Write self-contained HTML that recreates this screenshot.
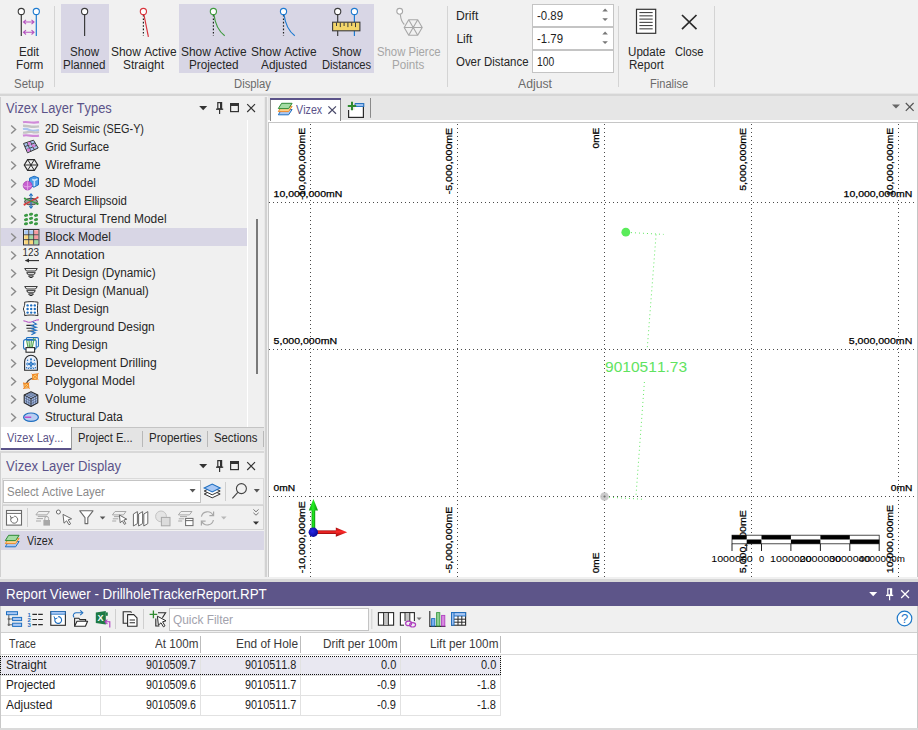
<!DOCTYPE html>
<html>
<head>
<meta charset="utf-8">
<title>Vizex</title>
<style>
*{box-sizing:border-box;margin:0;padding:0}
html,body{width:918px;height:730px;overflow:hidden;background:#f0f0f0}
body{font-family:"Liberation Sans",sans-serif;font-size:12px;color:#1e1e1e;position:relative;font-kerning:none}
.abs{position:absolute}
.t{position:absolute;white-space:nowrap;transform-origin:0 50%;display:block}
svg{position:absolute;overflow:visible}
</style>
</head>
<body>
<!-- ribbon -->
<div id="ribbon">
<div class="abs" style="left:0px;top:0px;width:918px;height:94px;background:#f1f1f1;"></div>
<div class="abs" style="left:0px;top:93px;width:918px;height:1px;background:#e6e6e6;"></div>
<div class="abs" style="left:0px;top:94px;width:918px;height:2px;background:#d6d6d6;"></div>
<div class="abs" style="left:61px;top:4px;width:48px;height:69px;background:#d8d6e5;"></div>
<div class="abs" style="left:179px;top:4px;width:195px;height:69px;background:#d8d6e5;"></div>
<div class="abs" style="left:54px;top:6px;width:1px;height:81px;background:#d4d4d4;"></div>
<div class="abs" style="left:447px;top:6px;width:1px;height:81px;background:#d4d4d4;"></div>
<div class="abs" style="left:618px;top:6px;width:1px;height:81px;background:#d4d4d4;"></div>
<div class="abs" style="left:714px;top:6px;width:1px;height:81px;background:#d4d4d4;"></div>
<span class="t" style="left:19.30px;top:45.34px;font-size:12px;line-height:14px;color:#262626;transform:scaleX(0.9672);">Edit</span>
<span class="t" style="left:15.60px;top:58.34px;font-size:12px;line-height:14px;color:#262626;transform:scaleX(0.9787);">Form</span>
<span class="t" style="left:70.10px;top:45.34px;font-size:12px;line-height:14px;color:#262626;transform:scaleX(0.9661);">Show</span>
<span class="t" style="left:63.35px;top:58.34px;font-size:12px;line-height:14px;color:#262626;transform:scaleX(0.9650);">Planned</span>
<span class="t" style="left:111.20px;top:45.34px;font-size:12px;line-height:14px;color:#262626;transform:scaleX(0.9944);">Show Active</span>
<span class="t" style="left:123.20px;top:58.34px;font-size:12px;line-height:14px;color:#262626;transform:scaleX(0.9914);">Straight</span>
<span class="t" style="left:181.20px;top:45.34px;font-size:12px;line-height:14px;color:#262626;transform:scaleX(0.9944);">Show Active</span>
<span class="t" style="left:188.95px;top:58.34px;font-size:12px;line-height:14px;color:#262626;transform:scaleX(0.9764);">Projected</span>
<span class="t" style="left:251.00px;top:45.34px;font-size:12px;line-height:14px;color:#262626;transform:scaleX(0.9944);">Show Active</span>
<span class="t" style="left:260.50px;top:58.34px;font-size:12px;line-height:14px;color:#262626;transform:scaleX(0.9850);">Adjusted</span>
<span class="t" style="left:331.80px;top:45.34px;font-size:12px;line-height:14px;color:#262626;transform:scaleX(0.9661);">Show</span>
<span class="t" style="left:321.70px;top:58.34px;font-size:12px;line-height:14px;color:#262626;transform:scaleX(0.9338);">Distances</span>
<span class="t" style="left:376.70px;top:45.34px;font-size:12px;line-height:14px;color:#a6a6a6;transform:scaleX(0.9441);">Show Pierce</span>
<span class="t" style="left:392.35px;top:58.34px;font-size:12px;line-height:14px;color:#a6a6a6;transform:scaleX(0.9684);">Points</span>
<span class="t" style="left:627.60px;top:45.34px;font-size:12px;line-height:14px;color:#262626;transform:scaleX(0.9665);">Update</span>
<span class="t" style="left:628.90px;top:58.34px;font-size:12px;line-height:14px;color:#262626;transform:scaleX(0.9662);">Report</span>
<span class="t" style="left:674.60px;top:45.34px;font-size:12px;line-height:14px;color:#262626;transform:scaleX(0.9257);">Close</span>
<span class="t" style="left:14.00px;top:77.04px;font-size:12px;line-height:14px;color:#6b6b6b;transform:scaleX(0.9566);">Setup</span>
<span class="t" style="left:233.50px;top:77.04px;font-size:12px;line-height:14px;color:#6b6b6b;transform:scaleX(0.9404);">Display</span>
<span class="t" style="left:518.40px;top:77.04px;font-size:12px;line-height:14px;color:#6b6b6b;transform:scaleX(1.0194);">Adjust</span>
<span class="t" style="left:649.90px;top:77.04px;font-size:12px;line-height:14px;color:#6b6b6b;transform:scaleX(0.9238);">Finalise</span>
<span class="t" style="left:456.40px;top:9.34px;font-size:12px;line-height:14px;color:#262626;transform:scaleX(1.0138);">Drift</span>
<span class="t" style="left:456.40px;top:32.44px;font-size:12px;line-height:14px;color:#262626;">Lift</span>
<span class="t" style="left:456.40px;top:55.44px;font-size:12px;line-height:14px;color:#262626;transform:scaleX(0.9536);">Over Distance</span>
<div class="abs" style="left:532px;top:4px;width:82px;height:23px;background:#fff;border:1px solid #c4c4c4;"></div>
<span class="t" style="left:536.60px;top:9.34px;font-size:12px;line-height:14px;color:#1e1e1e;transform:scaleX(0.9506);">-0.89</span>
<div class="abs" style="left:532px;top:27px;width:82px;height:23px;background:#fff;border:1px solid #c4c4c4;"></div>
<span class="t" style="left:536.60px;top:32.34px;font-size:12px;line-height:14px;color:#1e1e1e;transform:scaleX(0.9506);">-1.79</span>
<div class="abs" style="left:532px;top:50px;width:82px;height:23px;background:#fff;border:1px solid #c4c4c4;"></div>
<span class="t" style="left:536.60px;top:55.34px;font-size:12px;line-height:14px;color:#1e1e1e;transform:scaleX(0.8590);">100</span>
<svg style="left:0px;top:0px" width="918" height="94" viewBox="0 0 918 94"><path d="M602.3 11.5l2.8-2.9 2.8 2.9z" fill="#777"/><path d="M602.3 18.2l2.8 2.9 2.8-2.9z" fill="#777"/><path d="M602.3 34.5l2.8-2.9 2.8 2.9z" fill="#777"/><path d="M602.3 41.2l2.8 2.9 2.8-2.9z" fill="#777"/></svg>
<svg style="left:0px;top:0px" width="918" height="94" viewBox="0 0 918 94"><line x1="21.3" y1="15" x2="21.3" y2="36" stroke="#3c3c3c" stroke-width="1.2"/><circle cx="21.3" cy="11.5" r="3.1" fill="#fff" stroke="#3c3c3c" stroke-width="1.1"/><line x1="36.3" y1="15" x2="36.3" y2="36" stroke="#1e7bd0" stroke-width="1.2"/><circle cx="36.3" cy="11.5" r="3.1" fill="#fff" stroke="#1e7bd0" stroke-width="1.1"/><g stroke="#b553c0" stroke-width="1.1" fill="none"><path d="M23.5 22h10.5M26 19.8l-2.5 2.2 2.5 2.2M31.5 19.8l2.5 2.2-2.5 2.2"/><path d="M23.5 32.3h10.5M26 30.1l-2.5 2.2 2.5 2.2M31.5 30.1l2.5 2.2-2.5 2.2"/></g><line x1="84.6" y1="15" x2="84.6" y2="36" stroke="#3c3c3c" stroke-width="1.2"/><circle cx="84.6" cy="11.5" r="3.1" fill="#fff" stroke="#3c3c3c" stroke-width="1.1"/><line x1="143.4" y1="15" x2="143.4" y2="36" stroke="#222" stroke-width="1.2" stroke-dasharray="1.6 1.8"/><line x1="143.9" y1="14.5" x2="148.4" y2="36.8" stroke="#d8343c" stroke-width="1.2"/><circle cx="143.4" cy="11.5" r="3.1" fill="#fff" stroke="#d8343c" stroke-width="1.1"/><line x1="213.4" y1="15" x2="213.4" y2="36" stroke="#222" stroke-width="1.2" stroke-dasharray="1.6 1.8"/><path d="M213.9 14.5c1.2 9 5 17 10.8 21.2" fill="none" stroke="#3f9a3f" stroke-width="1.2"/><circle cx="213.4" cy="11.5" r="3.1" fill="#fff" stroke="#3f9a3f" stroke-width="1.1"/><line x1="283.5" y1="15" x2="283.5" y2="36" stroke="#222" stroke-width="1.2" stroke-dasharray="1.6 1.8"/><path d="M284 14.5c1.2 9 5 17 10.8 21.2" fill="none" stroke="#1e7bd0" stroke-width="1.2"/><circle cx="283.5" cy="11.5" r="3.1" fill="#fff" stroke="#1e7bd0" stroke-width="1.1"/><line x1="337.7" y1="15" x2="337.7" y2="36" stroke="#3c3c3c" stroke-width="1.2"/><circle cx="337.7" cy="11.5" r="3.1" fill="#fff" stroke="#3c3c3c" stroke-width="1.1"/><line x1="354.4" y1="15" x2="354.4" y2="36" stroke="#1e7bd0" stroke-width="1.2"/><circle cx="354.4" cy="11.5" r="3.1" fill="#fff" stroke="#1e7bd0" stroke-width="1.1"/><rect x="332.6" y="22.2" width="27.3" height="8.6" fill="#f3d56a" stroke="#3c3c3c" stroke-width="1.1"/><path d="M336.5 22.5v3.5M340.3 22.5v4.6M344.1 22.5v3.5M347.9 22.5v4.6M351.7 22.5v3.5M355.5 22.5v4.6" stroke="#3c3c3c" stroke-width="1"/><circle cx="399.7" cy="11.3" r="2.9" fill="#fff" stroke="#a8a8a8" stroke-width="1.1"/><path d="M400.3 14.3c0.5 5 1.5 8 4 10.2" fill="none" stroke="#a8a8a8" stroke-width="1.1"/><path d="M404.2 27.5l4.5-7.8h9l4.5 7.8-4.5 7.8h-9zM404.2 27.5h18M408.7 19.7l9 15.6M417.7 19.7l-9 15.6" fill="none" stroke="#a8a8a8" stroke-width="1.1"/><rect x="636.5" y="9.3" width="19.2" height="24" fill="#fff" stroke="#333" stroke-width="1.2"/><path d="M639.4 12.6h13.3M639.4 15.85h13.3M639.4 19.1h13.3M639.4 22.35h13.3M639.4 25.6h13.3M639.4 28.85h13.3" stroke="#333" stroke-width="1"/><path d="M682 15l14.5 14.2M696.5 15l-14.5 14.2" stroke="#2a2a2a" stroke-width="1.7" fill="none"/></svg>
</div>
<!-- left -->
<div id="left">
<div class="abs" style="left:0px;top:96px;width:264px;height:354px;background:#f0f0f0;"></div>
<div class="abs" style="left:0px;top:97px;width:1px;height:480px;background:#d0d0d0;"></div>
<div class="abs" style="left:264px;top:97px;width:1px;height:480px;background:#e8e8e8;"></div>
<div class="abs" style="left:265px;top:97px;width:2px;height:480px;background:#d2d2d2;"></div>
<div class="abs" style="left:267px;top:97px;width:1px;height:480px;background:#f0f0f0;"></div>
<span class="t" style="left:6.10px;top:99.55px;font-size:14px;line-height:17px;color:#5b5389;transform:scaleX(0.9185);">Vizex Layer Types</span>
<svg style="left:0px;top:0px" width="270" height="130" viewBox="0 0 270 130"><path d="M199.2 106h8l-4 4.2z" fill="#333"/><path d="M217.8 102.6h3.8v6.2h-3.8z" fill="none" stroke="#333" stroke-width="1.2"/><path d="M220.8 102.6v6.2" stroke="#333" stroke-width="1.6"/><path d="M216 109.2h7.2" stroke="#333" stroke-width="1.3"/><path d="M219.6 109.2v4.8" stroke="#333" stroke-width="1.2"/><rect x="230.6" y="103.6" width="7.8" height="8" fill="none" stroke="#333" stroke-width="1.2"/><rect x="230" y="103" width="9" height="3" fill="#333"/><path d="M247.2 104.2l7.8 7.8M255 104.2l-7.8 7.8" stroke="#333" stroke-width="1.15" fill="none"/></svg>
<div class="abs" style="left:247px;top:120px;width:1px;height:307px;background:#ffffff;"></div>
<div class="abs" style="left:256px;top:219px;width:2px;height:155px;background:#7a7a7a;"></div>
<span class="t" style="left:45.30px;top:122.44px;font-size:12px;line-height:14px;color:#262626;transform:scaleX(0.9053);">2D Seismic (SEG-Y)</span>
<svg style="left:23px;top:121px" width="16" height="16" viewBox="0 0 16 16"><rect x="0" y="0" width="16" height="16" fill="#f4f2f6"/><path d="M0 1.2c4-1 8 1.4 16 0" stroke="#d08ad8" stroke-width="2.2" fill="none"/><path d="M0 4.8c5-0.4 8 2 16 0.6" stroke="#c4c4c4" stroke-width="2.4" fill="none"/><path d="M0 8c3-0.6 5 0.2 7 1.2s5 0.6 9-0.2" stroke="#a9c4ee" stroke-width="2.2" fill="none"/><path d="M0 11.6c4 0.6 6-1.6 9-0.6s4 0.8 7 0" stroke="#c4c4c4" stroke-width="2.2" fill="none"/><path d="M0 14.6c5-1.4 9 1.4 16 0" stroke="#d08ad8" stroke-width="2.2" fill="none"/></svg>
<span class="t" style="left:45.30px;top:140.44px;font-size:12px;line-height:14px;color:#262626;transform:scaleX(0.9501);">Grid Surface</span>
<svg style="left:23px;top:139px" width="16" height="16" viewBox="0 0 16 16"><path d="M0.5 4.5L10.5 1.2L15.2 9L4.5 13.8z" fill="#a9c4ee" stroke="#3a3a3a" stroke-width="1"/><path d="M3.9 3.4l4 9M7.2 2.3l4.2 8.6M1.9 7.6l10.2-3.8M3.2 10.7l10.4-4.3" stroke="#3a3a3a" stroke-width="0.9" fill="none"/><path d="M4.6 3.6l2.4-0.8 1.4 2.9-2.5 0.9zM8.6 5.9l2.6-1 1.3 2.6-2.6 1.1zM3.6 10.2l2.6-1.1 1.2 2.6-2.6 1.2z" fill="#d880d8"/></svg>
<span class="t" style="left:45.30px;top:158.44px;font-size:12px;line-height:14px;color:#262626;">Wireframe</span>
<svg style="left:23px;top:157px" width="16" height="16" viewBox="0 0 16 16"><path d="M1.2 8l3.4-5.4h6.8l3.4 5.4-3.4 5.4H4.6z" fill="none" stroke="#2a2a2a" stroke-width="1.1"/><path d="M1.2 8h13.6M4.6 2.6l6.8 10.8M11.4 2.6L4.6 13.4" stroke="#2a2a2a" stroke-width="1" fill="none"/></svg>
<span class="t" style="left:45.30px;top:176.44px;font-size:12px;line-height:14px;color:#262626;transform:scaleX(0.9911);">3D Model</span>
<svg style="left:23px;top:175px" width="16" height="16" viewBox="0 0 16 16"><path d="M6.5 3.2l4.6-2 4.4 1.6v7l-4.6 2.4-4.4-2.2z" fill="#4a9be8" stroke="#1f6fc0" stroke-width="1"/><path d="M9.2 4.6l2.2 0.8v5.8M11.4 5.4l3-1.3" stroke="#cfe4fa" stroke-width="1.6" fill="none"/><circle cx="4.6" cy="10.6" r="4.4" fill="#c75fd0" stroke="#a83fb4" stroke-width="0.8"/><path d="M0.4 10.8c2 1.4 6 1.4 8.4 0M4.6 6.3v8.6" stroke="#e7b3ec" stroke-width="0.8" fill="none"/></svg>
<span class="t" style="left:45.30px;top:194.44px;font-size:12px;line-height:14px;color:#262626;transform:scaleX(0.9506);">Search Ellipsoid</span>
<svg style="left:23px;top:193px" width="16" height="16" viewBox="0 0 16 16"><ellipse cx="8" cy="8.6" rx="6.4" ry="3.3" fill="#9a9a9a" stroke="#333" stroke-width="0.9"/><path d="M8 1v14" stroke="#1f6fc0" stroke-width="1.1"/><path d="M6.4 2.8l1.6-2 1.6 2M6.4 13.2l1.6 2 1.6-2" fill="none" stroke="#1f6fc0" stroke-width="1.1"/><path d="M1.4 11.6L14.8 4.6" stroke="#e03030" stroke-width="1.1"/><path d="M1.6 5.6l13 5.2" stroke="#2f9a3a" stroke-width="1.1"/><circle cx="1.6" cy="11.6" r="1.1" fill="#e03030"/><circle cx="14.6" cy="4.6" r="1" fill="#e03030"/><circle cx="1.8" cy="5.6" r="1" fill="#2f9a3a"/><circle cx="14.4" cy="10.8" r="1.2" fill="#2f9a3a"/></svg>
<span class="t" style="left:45.30px;top:212.44px;font-size:12px;line-height:14px;color:#262626;transform:scaleX(0.9959);">Structural Trend Model</span>
<svg style="left:23px;top:211px" width="16" height="16" viewBox="0 0 16 16"><ellipse cx="3" cy="4.4" rx="2.1" ry="1.5" fill="#3b9a44" transform="rotate(-12 3 4.4)"/><ellipse cx="8" cy="3.2" rx="2.1" ry="1.5" fill="#3b9a44" transform="rotate(-12 8 3.2)"/><ellipse cx="13" cy="4.4" rx="2.1" ry="1.5" fill="#3b9a44" transform="rotate(-12 13 4.4)"/><ellipse cx="3" cy="8.6" rx="2.1" ry="1.5" fill="#3b9a44" transform="rotate(-12 3 8.6)"/><ellipse cx="8" cy="7.3999999999999995" rx="2.1" ry="1.5" fill="#3b9a44" transform="rotate(-12 8 7.3999999999999995)"/><ellipse cx="13" cy="8.6" rx="2.1" ry="1.5" fill="#3b9a44" transform="rotate(-12 13 8.6)"/><ellipse cx="3" cy="12.8" rx="2.1" ry="1.5" fill="#3b9a44" transform="rotate(-12 3 12.8)"/><ellipse cx="8" cy="11.600000000000001" rx="2.1" ry="1.5" fill="#3b9a44" transform="rotate(-12 8 11.600000000000001)"/><ellipse cx="13" cy="12.8" rx="2.1" ry="1.5" fill="#3b9a44" transform="rotate(-12 13 12.8)"/></svg>
<div class="abs" style="left:1px;top:228px;width:246px;height:18px;background:#d8d6e5;"></div>
<span class="t" style="left:45.30px;top:230.44px;font-size:12px;line-height:14px;color:#262626;transform:scaleX(1.0082);">Block Model</span>
<svg style="left:23px;top:229px" width="16" height="16" viewBox="0 0 16 16"><rect x="0.5" y="0.5" width="15.4" height="15.4" fill="#fff" stroke="#333" stroke-width="1"/><rect x="1.3" y="1.3" width="4" height="4" fill="#a9c8f5"/><rect x="6.2" y="1.3" width="4" height="4" fill="#a9c8f5"/><rect x="11.1" y="1.3" width="4" height="4" fill="#f79aa0"/><rect x="1.3" y="6.2" width="4" height="4" fill="#fbd67a"/><rect x="6.2" y="6.2" width="4" height="4" fill="#9fdca3"/><rect x="11.1" y="6.2" width="4" height="4" fill="#f79aa0"/><rect x="1.3" y="11.1" width="4" height="4" fill="#fbd67a"/><rect x="6.2" y="11.1" width="4" height="4" fill="#fbd67a"/><rect x="11.1" y="11.1" width="4" height="4" fill="#9fdca3"/><path d="M5.75 1v14.4M10.65 1v14.4M1 5.75h14.4M1 10.65h14.4" stroke="#333" stroke-width="0.9"/></svg>
<span class="t" style="left:45.30px;top:248.44px;font-size:12px;line-height:14px;color:#262626;transform:scaleX(1.0404);">Annotation</span>
<svg style="left:23px;top:247px" width="16" height="16" viewBox="0 0 16 16"><text x="-0.5" y="8.6" font-size="10.5" font-family="Liberation Sans,sans-serif" fill="#2a2a2a" textLength="16.5" lengthAdjust="spacingAndGlyphs">123</text><path d="M2.5 13.6h13.5" stroke="#2a2a2a" stroke-width="1.1"/><path d="M6 11.6l-4 2 4 2z" fill="#2a2a2a"/></svg>
<span class="t" style="left:45.30px;top:266.44px;font-size:12px;line-height:14px;color:#262626;transform:scaleX(0.9814);">Pit Design (Dynamic)</span>
<svg style="left:23px;top:265px" width="16" height="16" viewBox="0 0 16 16"><path d="M1.7 3.6H14.3L12.5 6H3.5Z M3.7 7.7H12.3L10.8 9.8H5.2Z M5.7 11H10.3L9.2 12.5H6.8Z" fill="#fff" stroke="#2a2a2a" stroke-width="1" stroke-linejoin="round"/></svg>
<span class="t" style="left:45.30px;top:284.44px;font-size:12px;line-height:14px;color:#262626;transform:scaleX(0.9850);">Pit Design (Manual)</span>
<svg style="left:23px;top:283px" width="16" height="16" viewBox="0 0 16 16"><path d="M1.7 3.6H14.3L12.5 6H3.5Z M3.7 7.7H12.3L10.8 9.8H5.2Z M5.7 11H10.3L9.2 12.5H6.8Z" fill="#fff" stroke="#2a2a2a" stroke-width="1" stroke-linejoin="round"/></svg>
<span class="t" style="left:45.30px;top:302.44px;font-size:12px;line-height:14px;color:#262626;transform:scaleX(0.9471);">Blast Design</span>
<svg style="left:23px;top:301px" width="16" height="16" viewBox="0 0 16 16"><path d="M1.6 1.2c4.4-0.8 8.4-0.8 13.4 0c-0.8 4.4-0.8 9 0 13.4c-5-0.8-9-0.8-13.4 0c0.6-2.6-0.6-4.2-1.2-6.6c0.6-2.4 1.8-4.2 1.2-6.8z" fill="#fff" stroke="#333" stroke-width="1"/><circle cx="4.6" cy="4.4" r="1.2" fill="#1f6fc0"/><circle cx="8.2" cy="4.4" r="1.2" fill="#1f6fc0"/><circle cx="11.8" cy="4.4" r="1.2" fill="#1f6fc0"/><circle cx="4.6" cy="8" r="1.2" fill="#1f6fc0"/><circle cx="8.2" cy="8" r="1.2" fill="#1f6fc0"/><circle cx="11.8" cy="8" r="1.2" fill="#1f6fc0"/><circle cx="4.6" cy="11.6" r="1.2" fill="#1f6fc0"/><circle cx="8.2" cy="11.6" r="1.2" fill="#1f6fc0"/><circle cx="11.8" cy="11.6" r="1.2" fill="#1f6fc0"/></svg>
<span class="t" style="left:45.30px;top:320.44px;font-size:12px;line-height:14px;color:#262626;transform:scaleX(0.9906);">Underground Design</span>
<svg style="left:23px;top:319px" width="16" height="16" viewBox="0 0 16 16"><path d="M0.4 1.8c3 0.2 4 2 7 1.4s5-2.4 8.6-2.4" stroke="#b040c0" stroke-width="1" fill="none"/><path d="M3.4 6.4h7.6M3.4 9.2h7.6M4.6 12h6.4" stroke="#2a2a2a" stroke-width="1.1"/><path d="M9.4 2.6l4 2.6-4.8 1.6 4.8 1.4-4.8 1.6 4.8 1.4-4.8 1.6 3.6 1-3.8 2" stroke="#1f6fc0" stroke-width="1.1" fill="none"/></svg>
<span class="t" style="left:45.30px;top:338.44px;font-size:12px;line-height:14px;color:#262626;transform:scaleX(0.9576);">Ring Design</span>
<svg style="left:23px;top:337px" width="16" height="16" viewBox="0 0 16 16"><rect x="3.4" y="0.6" width="12" height="9.4" rx="1.2" fill="#fff" stroke="#1f6fc0" stroke-width="1.1"/><rect x="0.6" y="2.6" width="12.6" height="9.6" rx="2" fill="#fff" stroke="#1f6fc0" stroke-width="1.1"/><path d="M3.6 3.2l1.6 8.2M6 3.2l0.6 8.2M8.4 3.2l-0.6 8.2M10.8 3.2l-1.8 8.2M12.4 1.4l-1 2M10.6 1.2l-0.4 2" stroke="#5aa85a" stroke-width="1.2" fill="none"/><path d="M3.6 3.2h7.4" stroke="#1f6fc0" stroke-width="1"/><rect x="3" y="10.6" width="8.6" height="4.6" fill="#fff" stroke="#2a2a2a" stroke-width="1.1"/></svg>
<span class="t" style="left:45.30px;top:356.44px;font-size:12px;line-height:14px;color:#262626;transform:scaleX(1.0098);">Development Drilling</span>
<svg style="left:23px;top:355px" width="16" height="16" viewBox="0 0 16 16"><path d="M1.6 15.2V6.6a6.4 6.4 0 0 1 12.8 0v8.6z" fill="#e9effa" stroke="#2a2a2a" stroke-width="1.1"/><circle cx="8" cy="9" r="1.5" fill="none" stroke="#1f6fc0" stroke-width="1"/><circle cx="8" cy="4.2" r="1" fill="#1f6fc0"/><circle cx="8" cy="12.6" r="1.1" fill="none" stroke="#1f6fc0" stroke-width="0.9"/><circle cx="4.6" cy="9" r="1" fill="none" stroke="#1f6fc0" stroke-width="0.9"/><circle cx="11.4" cy="9" r="1" fill="none" stroke="#1f6fc0" stroke-width="0.9"/><circle cx="4.6" cy="5.2" r="0.7" fill="#1f6fc0"/><circle cx="11.4" cy="5.2" r="0.7" fill="#1f6fc0"/><circle cx="3.6" cy="12.8" r="0.7" fill="#1f6fc0"/><circle cx="12.4" cy="12.8" r="0.7" fill="#1f6fc0"/><circle cx="5.4" cy="13.2" r="0.7" fill="#1f6fc0"/><circle cx="10.6" cy="13.2" r="0.7" fill="#1f6fc0"/><path d="M5.6 9h4.8M8 5.4v5.8" stroke="#1f6fc0" stroke-width="0.8"/></svg>
<span class="t" style="left:45.30px;top:374.44px;font-size:12px;line-height:14px;color:#262626;transform:scaleX(1.0144);">Polygonal Model</span>
<svg style="left:23px;top:373px" width="16" height="16" viewBox="0 0 16 16"><path d="M2.6 13.4c0.6-5 3.4-7.6 8.4-8.6" stroke="#4a4a4a" stroke-width="1.2" fill="none"/><path d="M9.6 1.6l5-0.6-0.6 5.2-4.2 0.2z" fill="#fbd67a" stroke="#f08a2a" stroke-width="1.1"/><path d="M8.6 0.8l6.8 5.8M15.4 0.4l-6.6 6.6" stroke="#f08a2a" stroke-width="1"/><path d="M0.8 10.4l4.6-0.2 0.4 4.6-4.4 0.4z" fill="#fbd67a" stroke="#f08a2a" stroke-width="1.1"/><path d="M0 9.6l6.6 6M6.4 9.4L0.2 16" stroke="#f08a2a" stroke-width="1"/></svg>
<span class="t" style="left:45.30px;top:392.44px;font-size:12px;line-height:14px;color:#262626;transform:scaleX(1.0068);">Volume</span>
<svg style="left:23px;top:391px" width="16" height="16" viewBox="0 0 16 16"><path d="M8 0.8l6.8 3.3v7.6L8 15.4l-6.8-3.7V4.1z" fill="#a9bfe8" stroke="#2a2a2a" stroke-width="1.1" stroke-linejoin="round"/><path d="M1.2 4.1L8 7.6l6.8-3.5M8 7.6v7.8" stroke="#2a2a2a" stroke-width="1" fill="none"/><path d="M3.5 2.9l6.8 3.5M5.8 1.8l6.8 3.5M12.5 2.9L5.7 6.4M10.2 1.8L3.4 5.3M1.2 6.7L8 10.3l6.8-3.6M1.2 9.2L8 12.9l6.8-3.7M3.5 5.3v7.7M5.8 6.5v7.7M10.2 6.5v7.7M12.5 5.3v7.7" stroke="#3a4a6a" stroke-width="0.5" fill="none"/></svg>
<span class="t" style="left:45.30px;top:410.44px;font-size:12px;line-height:14px;color:#262626;transform:scaleX(0.9696);">Structural Data</span>
<svg style="left:23px;top:409px" width="16" height="16" viewBox="0 0 16 16"><ellipse cx="8" cy="8.2" rx="7.4" ry="4.2" fill="#b9cdf2" stroke="#1f6fc0" stroke-width="1.2"/><path d="M1.6 8.2h6.6" stroke="#c030c0" stroke-width="1.2"/></svg>
<svg style="left:0px;top:0px" width="30" height="430" viewBox="0 0 30 430"><path d="M11.2 125.4l4.4 4.1-4.4 4.1" fill="none" stroke="#8a8a8a" stroke-width="1.4"/><path d="M11.2 143.4l4.4 4.1-4.4 4.1" fill="none" stroke="#8a8a8a" stroke-width="1.4"/><path d="M11.2 161.4l4.4 4.1-4.4 4.1" fill="none" stroke="#8a8a8a" stroke-width="1.4"/><path d="M11.2 179.4l4.4 4.1-4.4 4.1" fill="none" stroke="#8a8a8a" stroke-width="1.4"/><path d="M11.2 197.4l4.4 4.1-4.4 4.1" fill="none" stroke="#8a8a8a" stroke-width="1.4"/><path d="M11.2 215.4l4.4 4.1-4.4 4.1" fill="none" stroke="#8a8a8a" stroke-width="1.4"/><path d="M11.2 233.4l4.4 4.1-4.4 4.1" fill="none" stroke="#8a8a8a" stroke-width="1.4"/><path d="M11.2 251.4l4.4 4.1-4.4 4.1" fill="none" stroke="#8a8a8a" stroke-width="1.4"/><path d="M11.2 269.4l4.4 4.1-4.4 4.1" fill="none" stroke="#8a8a8a" stroke-width="1.4"/><path d="M11.2 287.4l4.4 4.1-4.4 4.1" fill="none" stroke="#8a8a8a" stroke-width="1.4"/><path d="M11.2 305.4l4.4 4.1-4.4 4.1" fill="none" stroke="#8a8a8a" stroke-width="1.4"/><path d="M11.2 323.4l4.4 4.1-4.4 4.1" fill="none" stroke="#8a8a8a" stroke-width="1.4"/><path d="M11.2 341.4l4.4 4.1-4.4 4.1" fill="none" stroke="#8a8a8a" stroke-width="1.4"/><path d="M11.2 359.4l4.4 4.1-4.4 4.1" fill="none" stroke="#8a8a8a" stroke-width="1.4"/><path d="M11.2 377.4l4.4 4.1-4.4 4.1" fill="none" stroke="#8a8a8a" stroke-width="1.4"/><path d="M11.2 395.4l4.4 4.1-4.4 4.1" fill="none" stroke="#8a8a8a" stroke-width="1.4"/><path d="M11.2 413.4l4.4 4.1-4.4 4.1" fill="none" stroke="#8a8a8a" stroke-width="1.4"/></svg>
<div class="abs" style="left:1px;top:427px;width:263px;height:1px;background:#c4c4c4;"></div>
<div class="abs" style="left:1px;top:428px;width:263px;height:22px;background:#e4e4e4;"></div>
<div class="abs" style="left:1px;top:427px;width:70px;height:21px;background:#ffffff;"></div>
<div class="abs" style="left:71px;top:427px;width:1px;height:23px;background:#999999;"></div>
<div class="abs" style="left:1px;top:448px;width:70px;height:2px;background:#5b5389;"></div>
<span class="t" style="left:7.40px;top:430.54px;font-size:12px;line-height:14px;color:#5b5389;transform:scaleX(0.9077);">Vizex Lay...</span>
<span class="t" style="left:78.20px;top:430.54px;font-size:12px;line-height:14px;color:#262626;transform:scaleX(0.9320);">Project E...</span>
<span class="t" style="left:149.40px;top:430.54px;font-size:12px;line-height:14px;color:#262626;transform:scaleX(0.9581);">Properties</span>
<span class="t" style="left:214.40px;top:430.54px;font-size:12px;line-height:14px;color:#262626;transform:scaleX(0.9451);">Sections</span>
<div class="abs" style="left:142px;top:431px;width:1px;height:16px;background:#b8b8b8;"></div>
<div class="abs" style="left:207px;top:431px;width:1px;height:16px;background:#b8b8b8;"></div>
<div class="abs" style="left:263px;top:431px;width:1px;height:16px;background:#b8b8b8;"></div>
<div class="abs" style="left:0px;top:450px;width:264px;height:1px;background:#efefef;"></div>
<div class="abs" style="left:0px;top:451px;width:264px;height:2px;background:#d8d8d8;"></div>
<div class="abs" style="left:1px;top:453px;width:263px;height:124px;background:#f1f1f1;"></div>
<span class="t" style="left:6.10px;top:458.05px;font-size:14px;line-height:17px;color:#5b5389;transform:scaleX(0.9357);">Vizex Layer Display</span>
<svg style="left:0px;top:0px" width="270" height="480" viewBox="0 0 270 480"><path d="M199.2 464h8l-4 4.2z" fill="#333"/><path d="M217.8 460.6h3.8v6.2h-3.8z" fill="none" stroke="#333" stroke-width="1.2"/><path d="M220.8 460.6v6.2" stroke="#333" stroke-width="1.6"/><path d="M216 467.2h7.2" stroke="#333" stroke-width="1.3"/><path d="M219.6 467.2v4.8" stroke="#333" stroke-width="1.2"/><rect x="230.6" y="461.6" width="7.8" height="8" fill="none" stroke="#333" stroke-width="1.2"/><rect x="230" y="461" width="9" height="3" fill="#333"/><path d="M247.2 462.2l7.8 7.8M255 462.2l-7.8 7.8" stroke="#333" stroke-width="1.15" fill="none"/></svg>
<div class="abs" style="left:2px;top:478px;width:262px;height:27px;background:transparent;border:1px solid #dadada;"></div>
<div class="abs" style="left:3px;top:480px;width:198px;height:23px;background:#fff;border:1px solid #c4c4c4;"></div>
<span class="t" style="left:6.50px;top:484.74px;font-size:12px;line-height:14px;color:#8a8a8a;transform:scaleX(0.9534);">Select Active Layer</span>
<svg style="left:0px;top:0px" width="270" height="510" viewBox="0 0 270 510"><path d="M189.6 489h6l-3 3.4z" fill="#555"/><g fill="#fff" stroke="#333" stroke-width="1"><path d="M204.2 494l8-3.6 8 3.6-8 3.8z"/><path d="M204.2 491l8-3.6 8 3.6-8 3.8z"/></g><path d="M204.2 488l8-4 8 4-8 4z" fill="#a9c8f5" stroke="#1f6fc0" stroke-width="1.1"/><path d="M225.5 482v19" stroke="#cfcfcf" stroke-width="1"/><circle cx="241.4" cy="488.6" r="5" fill="none" stroke="#444" stroke-width="1.1"/><path d="M237.8 492.4l-5.4 6" stroke="#444" stroke-width="1.2"/><path d="M253.8 489h6l-3 3.4z" fill="#555"/></svg>
<div class="abs" style="left:2px;top:505px;width:262px;height:25px;background:#f0f0f0;border:1px solid #d4d4d4;"></div>
<svg style="left:0px;top:0px" width="270" height="530" viewBox="0 0 270 530"><rect x="6.5" y="510.5" width="15" height="14.6" fill="#fff" stroke="#6a6a6a" stroke-width="1.1"/><path d="M6.5 513.4h15" stroke="#6a6a6a" stroke-width="1"/><path d="M11.4 517.6a3.5 3.5 0 1 0 2.8-1.4" fill="none" stroke="#6a6a6a" stroke-width="1"/><path d="M10.2 515.6l1 2.6 2.4-1" fill="none" stroke="#6a6a6a" stroke-width="1"/><path d="M27.5 508v19" stroke="#cfcfcf"/><g fill="none" stroke="#a8a8a8" stroke-width="1"><path d="M38.5 511.5h11l-2.6 3.4h-11zM37.8 516.4h9.4M36.6 518.6h6.4M36 521h5"/></g><rect x="43.4" y="520" width="6.6" height="5.6" fill="#a8a8a8"/><path d="M44.8 520v-1.6a1.9 1.9 0 0 1 3.8 0v1.6" fill="none" stroke="#a8a8a8" stroke-width="1"/><circle cx="58.4" cy="512" r="2" fill="#fff" stroke="#6a6a6a" stroke-width="1"/><path d="M63 514.4l8.6 4.4-3.4 1 2.4 4-1.6 1-2.4-4-2.6 2.4z" fill="#fff" stroke="#6a6a6a" stroke-width="1" stroke-linejoin="round"/><path d="M79.8 510.8h13.2l-5.2 6.8v6l-2.8 0v-6z" fill="#fff" stroke="#6a6a6a" stroke-width="1.1" stroke-linejoin="round"/><path d="M99.8 516.4h5.6l-2.8 3z" fill="#555"/><g fill="none" stroke="#a8a8a8" stroke-width="1"><path d="M115 511.5h11l-2.6 3.4h-11zM114 516.6h7M112.8 518.8h5.4M112.2 521h4"/></g><path d="M119.4 515l7.4 4.2-3 0.8 2 3.6-1.4 0.8-2-3.6-2.2 2z" fill="#fff" stroke="#6a6a6a" stroke-width="1" stroke-linejoin="round"/><path d="M133.4 514l4-2.4v12l-4 2.4zM138.6 514l4-2.4v12l-4 2.4zM143.8 514l4-2.4v12l-4 2.4z" fill="#fff" stroke="#6a6a6a" stroke-width="1" stroke-linejoin="round"/><circle cx="161" cy="516.4" r="5.4" fill="#e4e4e4" stroke="#c4c4c4" stroke-width="1"/><rect x="161.4" y="517.4" width="8.6" height="8.4" fill="#dcdcdc" stroke="#a8a8a8" stroke-width="1"/><g fill="none" stroke="#a8a8a8" stroke-width="1"><path d="M181 511.5h11l-2.6 3.4h-11zM180 516.6h7M178.8 518.8h5.4M178.2 521h4"/></g><rect x="185.6" y="518.4" width="7.4" height="7.2" fill="#fff" stroke="#6a6a6a" stroke-width="1"/><path d="M185.6 520.6h7.4" stroke="#6a6a6a"/><g fill="none" stroke="#a8a8a8" stroke-width="1.2"><path d="M201.4 516.6a6.2 6.2 0 0 1 11.6-1.4"/><path d="M213.4 520a6.2 6.2 0 0 1-11.6 1.6"/><path d="M213.6 511.4v4.2h-4.2M201.4 525.4v-4.2h4.2"/></g><path d="M221 516.6h5.6l-2.8 3z" fill="#b8b8b8"/><path d="M253.4 509.4l2.6 2.4 2.6-2.4M253.4 512.8l2.6 2.4 2.6-2.4" fill="none" stroke="#777" stroke-width="1"/><path d="M253 521.6h6l-3 3.2z" fill="#333"/></svg>
<div class="abs" style="left:1px;top:531px;width:263px;height:19px;background:#d8d6e5;"></div>
<svg style="left:4.6px;top:535px" width="15" height="13" viewBox="0 0 15 13"><path d="M3.6 6.5h10.5l-3.5 5.3H0.3z" fill="#a9c8f5" stroke="#1f6fc0" stroke-width="1" stroke-linejoin="round"/><path d="M3.6 3.3h10.5l-3.5 5.3H0.3z" fill="#fbd08a" stroke="#ee8a2a" stroke-width="1" stroke-linejoin="round"/><path d="M3.6 0.3h10.5l-3.5 5.3H0.3z" fill="#a4dca4" stroke="#2f8a36" stroke-width="1" stroke-linejoin="round"/></svg>
<span class="t" style="left:26.50px;top:534.14px;font-size:12px;line-height:14px;color:#262626;transform:scaleX(0.8892);">Vizex</span>
</div>
<!-- viz -->
<div id="viz">
<div class="abs" style="left:268px;top:96px;width:650px;height:24px;background:#e6e6e6;"></div>
<div class="abs" style="left:268px;top:120px;width:650px;height:2px;background:#ffffff;"></div>
<div class="abs" style="left:270px;top:98px;width:71px;height:23px;background:#ffffff;border-left:1px solid #8a8a8a;border-right:1px solid #8a8a8a;"></div>
<div class="abs" style="left:270px;top:98px;width:71px;height:2px;background:#5b5389;"></div>
<svg style="left:278px;top:103.4px" width="15" height="13" viewBox="0 0 15 13"><path d="M3.6 6.5h10.5l-3.5 5.3H0.3z" fill="#a9c8f5" stroke="#1f6fc0" stroke-width="1" stroke-linejoin="round"/><path d="M3.6 3.3h10.5l-3.5 5.3H0.3z" fill="#fbd08a" stroke="#ee8a2a" stroke-width="1" stroke-linejoin="round"/><path d="M3.6 0.3h10.5l-3.5 5.3H0.3z" fill="#a4dca4" stroke="#2f8a36" stroke-width="1" stroke-linejoin="round"/></svg>
<span class="t" style="left:296.00px;top:103.14px;font-size:12px;line-height:14px;color:#5b5389;transform:scaleX(0.8926);">Vizex</span>
<svg style="left:0px;top:0px" width="918" height="125" viewBox="0 0 918 125"><path d="M328.4 106.4l7.6 7.4M336 106.4l-7.6 7.4" stroke="#4a4a6a" stroke-width="1.2" fill="none"/><rect x="348.6" y="104.4" width="14.8" height="13" fill="#fff" stroke="#2a2a2a" stroke-width="1.2"/><rect x="355" y="103.6" width="8.8" height="2.8" fill="#a9c8f5" stroke="#1f6fc0" stroke-width="1"/><rect x="347" y="101.4" width="7.6" height="8.6" fill="#e6e6e6"/><path d="M352 101.8v8.4M347.8 106h8.4" stroke="#2f8a2f" stroke-width="2"/><path d="M370.5 98v19.8" stroke="#8a8a8a" stroke-width="1"/><path d="M892 104.4h8l-4 4.2z" fill="#666"/><path d="M905.8 103l7.8 7.8M913.6 103l-7.8 7.8" stroke="#555" stroke-width="1.2" fill="none"/></svg>
<div class="abs" style="left:268px;top:122px;width:650px;height:456px;background:#c6c6c6;"></div>
<div class="abs" style="left:269px;top:123px;width:648px;height:454px;background:#ffffff;"></div>
<div class="abs" style="left:917px;top:123px;width:1px;height:454px;background:#c4c4c4;"></div>
<svg style="left:0px;top:0px" width="918" height="580" viewBox="0 0 918 580"><g stroke="#4a4a4a" stroke-width="1" stroke-dasharray="1 3" shape-rendering="crispEdges"><line x1="310.5" y1="124" x2="310.5" y2="577"/><line x1="457.5" y1="124" x2="457.5" y2="577"/><line x1="604.5" y1="124" x2="604.5" y2="577"/><line x1="751.5" y1="124" x2="751.5" y2="577"/><line x1="898.5" y1="124" x2="898.5" y2="577"/><line x1="269" y1="202.5" x2="917" y2="202.5"/><line x1="269" y1="349.5" x2="917" y2="349.5"/><line x1="269" y1="496.5" x2="917" y2="496.5"/></g><g font-family="Liberation Sans,sans-serif" font-size="9.4" fill="#000" stroke="#000" stroke-width="0.25"><text x="273.6" y="196.7" text-anchor="start" textLength="68.7" lengthAdjust="spacingAndGlyphs">10,000,000mN</text><text x="912.3" y="196.7" text-anchor="end" textLength="68.7" lengthAdjust="spacingAndGlyphs">10,000,000mN</text><text x="273.6" y="343.7" text-anchor="start" textLength="63.5" lengthAdjust="spacingAndGlyphs">5,000,000mN</text><text x="912.3" y="343.7" text-anchor="end" textLength="63.5" lengthAdjust="spacingAndGlyphs">5,000,000mN</text><text x="273.6" y="490.7" text-anchor="start" textLength="21.6" lengthAdjust="spacingAndGlyphs">0mN</text><text x="912.3" y="490.7" text-anchor="end" textLength="21.6" lengthAdjust="spacingAndGlyphs">0mN</text><text transform="translate(305.4 127.8) rotate(-90)" text-anchor="end" textLength="72" lengthAdjust="spacingAndGlyphs">-10,000,000mE</text><text transform="translate(305.4 573.2) rotate(-90)" text-anchor="start" textLength="72" lengthAdjust="spacingAndGlyphs">-10,000,000mE</text><text transform="translate(452.4 127.8) rotate(-90)" text-anchor="end" textLength="66.5" lengthAdjust="spacingAndGlyphs">-5,000,000mE</text><text transform="translate(452.4 573.2) rotate(-90)" text-anchor="start" textLength="66.5" lengthAdjust="spacingAndGlyphs">-5,000,000mE</text><text transform="translate(599.4 127.8) rotate(-90)" text-anchor="end" textLength="20.6" lengthAdjust="spacingAndGlyphs">0mE</text><text transform="translate(599.4 573.2) rotate(-90)" text-anchor="start" textLength="20.6" lengthAdjust="spacingAndGlyphs">0mE</text><text transform="translate(746.4 127.8) rotate(-90)" text-anchor="end" textLength="63" lengthAdjust="spacingAndGlyphs">5,000,000mE</text><text transform="translate(746.4 573.2) rotate(-90)" text-anchor="start" textLength="63" lengthAdjust="spacingAndGlyphs">5,000,000mE</text><text transform="translate(893.4 127.8) rotate(-90)" text-anchor="end" textLength="68.3" lengthAdjust="spacingAndGlyphs">10,000,000mE</text><text transform="translate(893.4 573.2) rotate(-90)" text-anchor="start" textLength="68.3" lengthAdjust="spacingAndGlyphs">10,000,000mE</text></g><g stroke="#62e862" stroke-width="1" stroke-dasharray="1 3" fill="none"><path d="M631 232.6L663.6 234.4"/><path d="M656.1 234.5L647.2 349"/><path d="M644.4 382L635.9 497"/><path d="M609 497.2L642 499.2"/></g><circle cx="625.8" cy="232.2" r="4.4" fill="#5aec5a"/><circle cx="604.5" cy="496.5" r="4.3" fill="#c4c4c4" opacity="0.9"/><circle cx="604.5" cy="496.5" r="1" fill="#6a6a6a"/><defs><linearGradient id="gg" x1="0" x2="1"><stop offset="0" stop-color="#0a9a0a"/><stop offset="0.45" stop-color="#22f022"/><stop offset="1" stop-color="#0a8a0a"/></linearGradient><linearGradient id="rg" x1="0" x2="0" y1="0" y2="1"><stop offset="0" stop-color="#a00808"/><stop offset="0.45" stop-color="#ff2a2a"/><stop offset="1" stop-color="#900808"/></linearGradient><radialGradient id="bg" cx="0.4" cy="0.4" r="0.7"><stop offset="0" stop-color="#2828e8"/><stop offset="1" stop-color="#060690"/></radialGradient></defs><rect x="311.6" y="509" width="3.6" height="23" fill="url(#gg)"/><path d="M313.4 499l4.6 11.4h-9.2z" fill="url(#gg)"/><rect x="314" y="530.4" width="22.4" height="3.6" fill="url(#rg)"/><path d="M347.2 532.2l-11.4 4.6v-9.2z" fill="url(#rg)"/><circle cx="313.3" cy="532.2" r="4.7" fill="url(#bg)"/><rect x="732.0" y="535.2" width="147.2" height="8.6" fill="#fff" stroke="#222" stroke-width="0.8"/><rect x="732.0" y="535.2" width="14.7" height="4.3" fill="#000"/><rect x="746.7" y="539.5" width="14.7" height="4.3" fill="#000"/><rect x="761.5" y="535.2" width="29.4" height="4.3" fill="#000"/><rect x="790.9" y="539.5" width="29.5" height="4.3" fill="#000"/><rect x="820.4" y="535.2" width="29.4" height="4.3" fill="#000"/><rect x="849.8" y="539.5" width="29.5" height="4.3" fill="#000"/><path d="M732.0 543.8v7.2" stroke="#222" stroke-width="1"/><path d="M746.7 543.8v7.2" stroke="#222" stroke-width="1"/><path d="M761.5 543.8v7.2" stroke="#222" stroke-width="1"/><path d="M790.9 543.8v7.2" stroke="#222" stroke-width="1"/><path d="M820.4 543.8v7.2" stroke="#222" stroke-width="1"/><path d="M849.8 543.8v7.2" stroke="#222" stroke-width="1"/><path d="M879.2 543.8v7.2" stroke="#222" stroke-width="1"/><g font-family="Liberation Sans,sans-serif" font-size="9.4" fill="#000" text-anchor="middle"><text x="732.0" y="562.2" textLength="41.6" lengthAdjust="spacingAndGlyphs">1000000</text><text x="761.5" y="562.2">0</text><text x="790.9" y="562.2" textLength="41.6" lengthAdjust="spacingAndGlyphs">1000000</text><text x="820.4" y="562.2" textLength="41.6" lengthAdjust="spacingAndGlyphs">2000000</text><text x="849.8" y="562.2" textLength="41.6" lengthAdjust="spacingAndGlyphs">3000000</text><text x="858.5" y="562.2" text-anchor="start" textLength="46.5" lengthAdjust="spacingAndGlyphs">4000000m</text></g></svg>
<span class="t" style="left:605.30px;top:357.90px;font-size:15px;line-height:18px;color:#5fe35f;transform:scaleX(1.0366);">9010511.73</span>
</div>
<!-- report -->
<div id="report">
<div class="abs" style="left:0px;top:577px;width:918px;height:3px;background:#f0f0f0;"></div>
<div class="abs" style="left:0px;top:579px;width:918px;height:3px;background:#d8d8d8;"></div>
<div class="abs" style="left:0px;top:582px;width:918px;height:24px;background:#5d5589;"></div>
<span class="t" style="left:6.30px;top:585.85px;font-size:14px;line-height:17px;color:#ffffff;transform:scaleX(0.9548);">Report Viewer - DrillholeTrackerReport.RPT</span>
<svg style="left:0px;top:0px" width="918" height="606" viewBox="0 0 918 606"><path d="M869.2 592h8l-4 4.2z" fill="#fff"/><path d="M887.8 588.8h3.8v6.2h-3.8z" fill="none" stroke="#fff" stroke-width="1.2"/><path d="M890.8 588.8v6.2" stroke="#fff" stroke-width="1.6"/><path d="M886 595.4h7.2" stroke="#fff" stroke-width="1.3"/><path d="M889.6 595.4v4.8" stroke="#fff" stroke-width="1.2"/><path d="M901.2 590.2l7.8 7.8M909 590.2l-7.8 7.8" stroke="#fff" stroke-width="1.3" fill="none"/></svg>
<div class="abs" style="left:0px;top:606px;width:918px;height:27px;background:#f0f0f0;"></div>
<div class="abs" style="left:0px;top:606px;width:1px;height:124px;background:#c8c8c8;"></div>
<div class="abs" style="left:917px;top:606px;width:1px;height:124px;background:#c8c8c8;"></div>
<div class="abs" style="left:1px;top:632px;width:916px;height:1px;background:#cfcfcf;"></div>
<div class="abs" style="left:1px;top:633px;width:916px;height:95px;background:#ffffff;"></div>
<div class="abs" style="left:0px;top:728px;width:918px;height:2px;background:#dadada;"></div>
<div class="abs" style="left:169px;top:608px;width:200px;height:23px;background:#fff;border:1px solid #c4c4c4;"></div>
<svg style="left:0px;top:0px" width="918" height="632" viewBox="0 0 918 632"><path d="M8.8 614.6v10.2M8.8 619h3.8M8.8 624.8h3.8" stroke="#6a6a6a" stroke-width="1.1" fill="none"/><circle cx="8.8" cy="619" r="1.2" fill="#6a6a6a"/><circle cx="8.8" cy="624.8" r="1.2" fill="#6a6a6a"/><rect x="6.5" y="611.7" width="11" height="3" fill="#a9c8f5" stroke="#1f6fc0" stroke-width="1"/><rect x="12.6" y="617.4" width="9" height="3.2" fill="#a9c8f5" stroke="#1f6fc0" stroke-width="1"/><rect x="12.6" y="623.2" width="9" height="3.2" fill="#a9c8f5" stroke="#1f6fc0" stroke-width="1"/><path d="M32.4 614.3h4.6M38.2 614.3h4.6" stroke="#2a2a2a" stroke-width="1.2"/><text x="27.6" y="616.5" font-family="Liberation Sans,sans-serif" font-size="6" font-weight="bold" fill="#1f6fc0">1</text><path d="M32.4 619.5h4.6M38.2 619.5h4.6" stroke="#2a2a2a" stroke-width="1.2"/><text x="27.6" y="621.7" font-family="Liberation Sans,sans-serif" font-size="6" font-weight="bold" fill="#1f6fc0">2</text><path d="M32.4 624.7h4.6M38.2 624.7h4.6" stroke="#2a2a2a" stroke-width="1.2"/><text x="27.6" y="626.9000000000001" font-family="Liberation Sans,sans-serif" font-size="6" font-weight="bold" fill="#1f6fc0">3</text><rect x="50.8" y="611.7" width="14.6" height="13.6" fill="#fff" stroke="#2a2a2a" stroke-width="1.1"/><rect x="51" y="611.6" width="14.2" height="2.6" fill="#a9c8f5" stroke="#1f6fc0" stroke-width="0.8"/><path d="M55.2 618.4a3.4 3.4 0 1 0 3-1.8" fill="none" stroke="#1f6fc0" stroke-width="1.1"/><path d="M54 616.4l1 2.6 2.4-1" fill="none" stroke="#1f6fc0" stroke-width="1"/><path d="M74.6 626.2v-8h4.2l1.2 1.4h5.6v2" fill="none" stroke="#2a2a2a" stroke-width="1.1"/><path d="M74.6 626.2l2.4-5h10.6l-2.2 5z" fill="#fff" stroke="#2a2a2a" stroke-width="1.1" stroke-linejoin="round"/><path d="M74 617.4c-2-2.6 0.4-5 3-4.6h5.4" fill="none" stroke="#1f6fc0" stroke-width="1.1"/><path d="M80.2 610.4l2.6 2.4-2.6 2.4" fill="none" stroke="#1f6fc0" stroke-width="1.1"/><path d="M95.8 612.6l10-1.6v13.6l-10-1.6z" fill="#1e7a46"/><text x="100.6" y="621.4" text-anchor="middle" font-family="Liberation Sans,sans-serif" font-size="9" font-weight="bold" fill="#fff">X</text><path d="M105.8 612.4h2v3.4h-2z" fill="#1e7a46"/><path d="M109.8 627.4v-5.6h-4.4" fill="none" stroke="#b040c0" stroke-width="1.1"/><path d="M107.4 619.6l-2.4 2.2 2.4 2.2" fill="none" stroke="#b040c0" stroke-width="1.1"/><path d="M115.5 609v20M143.5 609v20M371.8 609v20" stroke="#cfcfcf" stroke-width="1"/><path d="M127.6 623.2h-4.4v-11.4h7.6l0.8 0.8" fill="none" stroke="#2a2a2a" stroke-width="1.1"/><path d="M127.6 614.6h6.2l3.2 3.2v8.4h-9.4z" fill="#fff" stroke="#2a2a2a" stroke-width="1.1" stroke-linejoin="round"/><path d="M129.6 620h5.4M129.6 622.8h5.4" stroke="#2a2a2a" stroke-width="1.1"/><path d="M153.4 610.6v7.6M149.6 614.4h7.6" stroke="#2f8a2f" stroke-width="1.3"/><path d="M158 612.8h7.6l-3.2 5M155.8 618.4v7.6h3.6" fill="none" stroke="#2a2a2a" stroke-width="1.1"/><path d="M157.4 616.2l8.6 4.6-3.4 1 2.4 4-1.6 1-2.4-4-2.6 2.4z" fill="#fff" stroke="#2a2a2a" stroke-width="1" stroke-linejoin="round"/><rect x="378.4" y="612.6" width="15.2" height="12.6" fill="#fff" stroke="#2a2a2a" stroke-width="1.1"/><rect x="383.8" y="613" width="4.4" height="12" fill="#c4c4c4"/><path d="M383.6 612.6v12.6M388.4 612.6v12.6" stroke="#2a2a2a" stroke-width="1"/><rect x="400.4" y="612.6" width="14" height="12.6" fill="#fff" stroke="#2a2a2a" stroke-width="1.1"/><rect x="405.2" y="613" width="4.4" height="9" fill="#c4c4c4"/><path d="M405 612.6v12.6M409.8 612.6v9" stroke="#2a2a2a" stroke-width="1"/><rect x="404" y="621" width="13" height="6.6" fill="#f0f0f0"/><ellipse cx="408.6" cy="623.4" rx="3" ry="2.2" fill="none" stroke="#b040c0" stroke-width="1.2"/><ellipse cx="412.6" cy="624.8" rx="3" ry="2.2" fill="none" stroke="#b040c0" stroke-width="1.2"/><path d="M416.6 617.4h5l-2.5 2.8z" fill="#777"/><path d="M429.8 611v15.4h15.6" fill="none" stroke="#2a2a2a" stroke-width="1.1"/><rect x="431.6" y="618.6" width="3.2" height="7.4" fill="#7ab0f0" stroke="#1f6fc0" stroke-width="0.9"/><rect x="436.6" y="612.6" width="3.2" height="13.4" fill="#8fd08f" stroke="#3b9a44" stroke-width="0.9"/><rect x="441.6" y="615.4" width="3.2" height="10.6" fill="#d88ae0" stroke="#b040c0" stroke-width="0.9"/><rect x="451.6" y="612.6" width="14" height="12.6" fill="#fff" stroke="#2a2a2a" stroke-width="1.1"/><rect x="451.6" y="612.6" width="14" height="3.4" fill="#a9c8f5" stroke="#1f6fc0" stroke-width="1"/><rect x="451.6" y="612.6" width="2.4" height="12.6" fill="#a9c8f5" stroke="#1f6fc0" stroke-width="1"/><path d="M454.2 619.2h11.4M454.2 622.2h11.4M458 616v9.2M461.8 616v9.2" stroke="#2a2a2a" stroke-width="1"/><circle cx="904.5" cy="618.5" r="7.3" fill="#fff" stroke="#1f78c8" stroke-width="1.2"/><text x="904.5" y="623.4" text-anchor="middle" font-family="Liberation Sans,sans-serif" font-size="13" fill="#1f78c8">?</text></svg>
<span class="t" style="left:173.20px;top:612.74px;font-size:12px;line-height:14px;color:#a2a2ac;transform:scaleX(0.9889);">Quick Filter</span>
<span class="t" style="left:9.30px;top:637.34px;font-size:12px;line-height:14px;color:#3a3a3a;transform:scaleX(0.8766);">Trace</span>
<span class="t" style="left:154.60px;top:637.34px;font-size:12px;line-height:14px;color:#3a3a3a;transform:scaleX(0.9711);">At 100m</span>
<span class="t" style="left:236.40px;top:637.34px;font-size:12px;line-height:14px;color:#3a3a3a;transform:scaleX(0.9887);">End of Hole</span>
<span class="t" style="left:323.30px;top:637.34px;font-size:12px;line-height:14px;color:#3a3a3a;transform:scaleX(0.9799);">Drift per 100m</span>
<span class="t" style="left:429.60px;top:637.34px;font-size:12px;line-height:14px;color:#3a3a3a;transform:scaleX(0.9766);">Lift per 100m</span>
<div class="abs" style="left:100px;top:636px;width:1px;height:17px;background:#bdbdbd;"></div>
<div class="abs" style="left:200px;top:636px;width:1px;height:17px;background:#bdbdbd;"></div>
<div class="abs" style="left:300px;top:636px;width:1px;height:17px;background:#bdbdbd;"></div>
<div class="abs" style="left:400px;top:636px;width:1px;height:17px;background:#bdbdbd;"></div>
<div class="abs" style="left:500px;top:636px;width:1px;height:17px;background:#bdbdbd;"></div>
<div class="abs" style="left:1px;top:654px;width:916px;height:1px;background:#d9d9d9;"></div>
<div class="abs" style="left:1px;top:657px;width:499px;height:18px;background:#e9e8f1;"></div>
<span class="t" style="left:6.30px;top:658.24px;font-size:12px;line-height:14px;color:#1e1e1e;transform:scaleX(0.9817);">Straight</span>
<span class="t" style="left:146.00px;top:658.24px;font-size:12px;line-height:14px;color:#1e1e1e;transform:scaleX(0.8814);">9010509.7</span>
<span class="t" style="left:245.40px;top:658.24px;font-size:12px;line-height:14px;color:#1e1e1e;transform:scaleX(0.9062);">9010511.8</span>
<span class="t" style="left:380.70px;top:658.24px;font-size:12px;line-height:14px;color:#1e1e1e;transform:scaleX(0.9172);">0.0</span>
<span class="t" style="left:481.00px;top:658.24px;font-size:12px;line-height:14px;color:#1e1e1e;transform:scaleX(0.9172);">0.0</span>
<div class="abs" style="left:1px;top:675px;width:500px;height:1px;background:#e2e2e2;"></div>
<span class="t" style="left:6.30px;top:678.24px;font-size:12px;line-height:14px;color:#1e1e1e;transform:scaleX(0.9724);">Projected</span>
<span class="t" style="left:146.00px;top:678.24px;font-size:12px;line-height:14px;color:#1e1e1e;transform:scaleX(0.8814);">9010509.6</span>
<span class="t" style="left:245.40px;top:678.24px;font-size:12px;line-height:14px;color:#1e1e1e;transform:scaleX(0.9062);">9010511.7</span>
<span class="t" style="left:377.00px;top:678.24px;font-size:12px;line-height:14px;color:#1e1e1e;transform:scaleX(0.9188);">-0.9</span>
<span class="t" style="left:477.30px;top:678.24px;font-size:12px;line-height:14px;color:#1e1e1e;transform:scaleX(0.9188);">-1.8</span>
<div class="abs" style="left:1px;top:695px;width:500px;height:1px;background:#e2e2e2;"></div>
<span class="t" style="left:6.30px;top:698.24px;font-size:12px;line-height:14px;color:#1e1e1e;transform:scaleX(0.9914);">Adjusted</span>
<span class="t" style="left:146.00px;top:698.24px;font-size:12px;line-height:14px;color:#1e1e1e;transform:scaleX(0.8814);">9010509.6</span>
<span class="t" style="left:245.40px;top:698.24px;font-size:12px;line-height:14px;color:#1e1e1e;transform:scaleX(0.9062);">9010511.7</span>
<span class="t" style="left:377.00px;top:698.24px;font-size:12px;line-height:14px;color:#1e1e1e;transform:scaleX(0.9188);">-0.9</span>
<span class="t" style="left:477.30px;top:698.24px;font-size:12px;line-height:14px;color:#1e1e1e;transform:scaleX(0.9188);">-1.8</span>
<div class="abs" style="left:1px;top:715px;width:500px;height:1px;background:#e2e2e2;"></div>
<div class="abs" style="left:100px;top:655px;width:1px;height:61px;background:#e2e2e2;"></div>
<div class="abs" style="left:200px;top:655px;width:1px;height:61px;background:#e2e2e2;"></div>
<div class="abs" style="left:300px;top:655px;width:1px;height:61px;background:#e2e2e2;"></div>
<div class="abs" style="left:400px;top:655px;width:1px;height:61px;background:#e2e2e2;"></div>
<div class="abs" style="left:500px;top:655px;width:1px;height:61px;background:#e2e2e2;"></div>
<div class="abs" style="left:0;top:656px;width:501px;height:19px;border:1px dotted #111;"></div>
</div>
</body>
</html>
